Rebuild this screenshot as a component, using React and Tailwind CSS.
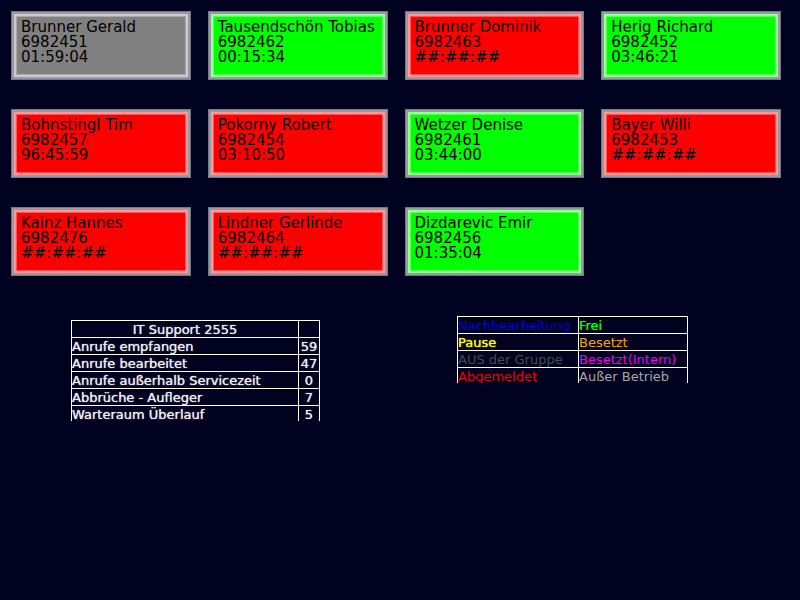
const agents = [
  { name: 'Brunner Gerald', ext: '6982451', time: '01:59:04', status: 'off' },
  { name: 'Tausendschön Tobias', ext: '6982462', time: '00:15:34', status: 'free' },
  { name: 'Brunner Dominik', ext: '6982463', time: '##:##:##', status: 'out' },
  { name: 'Herig Richard', ext: '6982452', time: '03:46:21', status: 'free' },
  { name: 'Bohnstingl Tim', ext: '6982457', time: '96:45:59', status: 'out' },
  { name: 'Pokorny Robert', ext: '6982454', time: '03:10:50', status: 'out' },
  { name: 'Wetzer Denise', ext: '6982461', time: '03:44:00', status: 'free' },
  { name: 'Bayer Willi', ext: '6982453', time: '##:##:##', status: 'out' },
  { name: 'Kainz Hannes', ext: '6982476', time: '##:##:##', status: 'out' },
  { name: 'Lindner Gerlinde', ext: '6982464', time: '##:##:##', status: 'out' },
  { name: 'Dizdarevic Emir', ext: '6982456', time: '01:35:04', status: 'free' },
];

const tones = {
  off: 'bg-[#808080] border-[#cccccc] inset-shadow-[0_0_0_1px_#a8a8a8]',
  free: 'bg-[#00ff00] border-[#99ff99] inset-shadow-[0_0_0_1px_#55ff55]',
  out: 'bg-[#ff0000] border-[#ff9999] inset-shadow-[0_0_0_1px_#ff5555]',
};

const calls = [
  ['Anrufe empfangen', 59],
  ['Anrufe bearbeitet', 47],
  ['Anrufe außerhalb Servicezeit', 0],
  ['Abbrüche - Aufleger', 7],
  ['Warteraum Überlauf', 5],
];

const legend = [
  [['Nachbearbeitung', 'text-[#0000dd]'], ['Frei', 'text-[#00ff00] [text-shadow:0_0_1px_currentcolor]']],
  [['Pause', 'text-[#ffff00] [text-shadow:0_0_1px_currentcolor]'], ['Besetzt', 'text-[#ffa500]']],
  [['AUS der Gruppe', 'text-[#4a4a52]'], ['Besetzt(Intern)', 'text-[#ee00ee]']],
  [['Abgemeldet', 'text-[#ee0000]'], ['Außer Betrieb', 'text-[#a8a8a8]']],
];

function AgentCard({ name, ext, time, status }) {
  return (
    <article className="h-[69px] border border-[#777785] bg-[#9999a6] p-0.5">
      <div className={`h-full border-2 pt-1 pl-[5px] text-[15px] leading-[15px] whitespace-nowrap text-black ${tones[status]}`}>
        <h2>{name}</h2>
        <p>{ext}</p>
        <p>{time}</p>
      </div>
    </article>
  );
}

export default function App() {
  return (
    <main className="min-h-screen bg-[#000220] font-['Verdana','DejaVu_Sans',sans-serif]">
      <section className="grid grid-cols-4 gap-x-[17px] gap-y-[29px] pt-[11px] pr-[19px] pl-[11px]">
        {agents.map((a) => (
          <AgentCard key={a.ext} {...a} />
        ))}
      </section>
      <div className="grid grid-cols-2 items-start pt-10 text-[13px] leading-[14px]">
        <div className="mt-1 ml-[71px] h-[101px] overflow-hidden">
          <table className="w-[249px] table-fixed border-collapse text-[#eeeeee] [text-shadow:0_0_1px_currentcolor]">
            <thead>
              <tr className="h-[17px]">
                <th className="border border-white p-0 pt-0.5 text-center font-normal">IT Support 2555</th>
                <th className="w-[21px] border border-white p-0" aria-label="Anzahl"></th>
              </tr>
            </thead>
            <tbody>
              {calls.map(([label, count]) => (
                <tr key={label} className="h-[17px]">
                  <td className="border border-white p-0 pt-0.5 whitespace-nowrap">{label}</td>
                  <td className="border border-white p-0 pt-0.5 text-center">{count}</td>
                </tr>
              ))}
            </tbody>
          </table>
        </div>
        <div className="ml-[57px] h-[67px] overflow-hidden">
          <table className="w-[231px] table-fixed border-collapse">
            <colgroup>
              <col className="w-[121px]" />
              <col />
            </colgroup>
            <tbody>
              {legend.map((row) => (
                <tr key={row[0][0]} className="h-[17px]">
                  {row.map(([label, tone]) => (
                    <td key={label} className={`border border-white p-0 pt-0.5 whitespace-nowrap ${tone}`}>
                      {label}
                    </td>
                  ))}
                </tr>
              ))}
            </tbody>
          </table>
        </div>
      </div>
    </main>
  );
}
